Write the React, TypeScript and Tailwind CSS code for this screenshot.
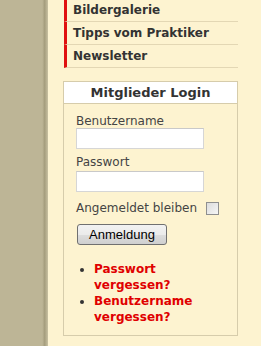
import React from 'react';

const menuItems = ['Bildergalerie', 'Tipps vom Praktiker', 'Newsletter'];

const App: React.FC = () => {
  return (
    <div className="flex h-[346px] w-[261px] overflow-hidden font-['DejaVu_Sans',Verdana,sans-serif] text-[#333]">
      {/* khaki page edge */}
      <div className="w-[48px] shrink-0 bg-[linear-gradient(to_right,#bdb596_0%,#bdb596_88%,#a59d7d_93%,#c9c1a2_100%)]" />

      <div className="flex-1 bg-[#fdf3d0] pl-[15px]">
        {/* side menu */}
        <ul className="mt-[-1px] ml-[1px] w-[174px]">
          {menuItems.map((item) => (
            <li
              key={item}
              className="flex h-[23px] items-center border-b border-l-[3px] border-b-[#e3d7b4] border-l-[#e01010] pl-[6px] text-[12px] font-bold text-[#333]"
            >
              {item}
            </li>
          ))}
        </ul>

        {/* login box */}
        <div className="mt-[13px] w-[175px] border border-[#d6ccab] bg-[#fdf3d0]">
          <h3 className="flex h-[22px] items-center justify-center border-b border-[#d6ccab] bg-white text-[13px] font-bold text-[#333]">
            Mitglieder Login
          </h3>

          <form className="px-[12px] pt-[10px] pb-[10px] text-[12px]">
            <label className="block leading-[14px] text-[#444]">Benutzername</label>
            <input
              type="text"
              className="block h-[21px] w-[128px] border border-[#d6d6d6] border-t-[#c9c9c9] bg-white"
            />

            <label className="mt-[6px] block leading-[14px] text-[#444]">Passwort</label>
            <input
              type="password"
              className="mt-[2px] block h-[21px] w-[128px] border border-[#d6d6d6] border-t-[#c9c9c9] bg-white"
            />

            <div className="mt-[9px] flex h-[14px] items-center">
              <span className="whitespace-nowrap leading-[14px] text-[#444]">Angemeldet bleiben</span>
              <span className="ml-[9px] block h-[13px] w-[13px] shrink-0 border border-[#8f8f8f] bg-[linear-gradient(135deg,#dcdcdc,#f6f6f6)]" />
            </div>

            <button
              type="button"
              className="mt-[9px] ml-[1px] flex h-[21px] w-[90px] items-center justify-center rounded-[3px] border border-[#707070] bg-[linear-gradient(to_bottom,#f2f2f2_0%,#ebebeb_50%,#dddddd_51%,#cfcfcf_100%)] font-['Liberation_Sans',Arial,sans-serif] text-[13px] text-black"
            >
              Anmeldung
            </button>

            <ul className="mt-[16px] list-disc pl-[18px] text-[12px] leading-[16px] font-bold text-[#e00000] marker:text-[#333]">
              <li>Passwort vergessen?</li>
              <li>Benutzername vergessen?</li>
            </ul>
          </form>
        </div>
      </div>
    </div>
  );
};

export default App;
